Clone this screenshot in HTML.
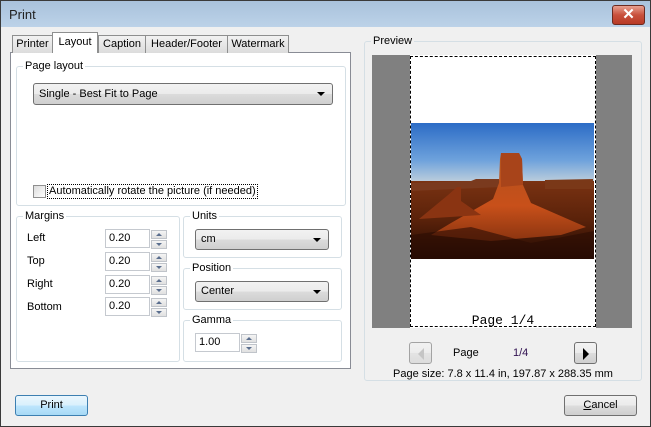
<!DOCTYPE html>
<html><head><meta charset="utf-8"><style>
*{box-sizing:border-box;margin:0;padding:0}
body{width:651px;height:427px;overflow:hidden;font-family:"Liberation Sans",sans-serif;font-size:11px;color:#000;background:#f0f0f0;position:relative}
.a{position:absolute}
.win{left:0;top:0;width:651px;height:427px;border:1px solid #3a3a3a;background:#f0f0f0}
.title{left:1px;top:1px;width:649px;height:26px;background:linear-gradient(#a9c2dc,#bcd2e8);}
.title span{position:absolute;left:8px;top:6px;font-size:13px;color:#222}
.close{left:612px;top:5px;width:33px;height:20px;border:1px solid #6b2a20;border-radius:3px;background:linear-gradient(#e8a090,#c8503c 50%,#b83a26);color:#fff;font-size:15px;font-weight:bold;text-align:center;line-height:18px}
.tab{top:35px;height:18px;border:1px solid #8e8f8f;border-bottom:none;background:linear-gradient(#f2f2f2,#dcdcdc);text-align:center;line-height:16px;font-size:11px}
.tab.sel{top:32px;height:21px;background:#fff;z-index:2;line-height:19px}
.panel{left:10px;top:52px;width:341px;height:317px;border:1px solid #898c95;background:#fff}
.grp{border:1px solid #d5dfe5;border-radius:3px}
.lg{background:inherit;padding:0 2px;font-size:11px;position:absolute;top:-8px;left:6px;line-height:14px}
.combo{border:1px solid #707070;border-radius:3px;background:linear-gradient(#f2f2f2,#ebebeb 50%,#dcdcdc 50%,#cfcfcf);padding-left:5px;line-height:19px}
.combo:after{content:"";position:absolute;right:7px;top:8px;border-left:4px solid transparent;border-right:4px solid transparent;border-top:4px solid #000}
.inp{border:1px solid #c5c9cf;background:#fff;padding-left:3px;line-height:17px;height:19px;width:45px}
.spin{width:16px;height:19px}
.spin div{position:absolute;left:0;width:16px;height:9px;border:1px solid #c0c4ca;background:linear-gradient(#f4f4f4,#e0e0e0)}
.spin div:after{content:"";position:absolute;left:4px;border-left:3px solid transparent;border-right:3px solid transparent}
.spin .u{top:0}.spin .u:after{top:2px;border-bottom:3px solid #5a6e8e}
.spin .d{top:10px}.spin .d:after{top:2px;border-top:3px solid #5a6e8e}
.btn{border:1px solid #707070;border-radius:3px;background:linear-gradient(#f2f2f2,#ebebeb 50%,#dddddd 50%,#cfcfcf);text-align:center;line-height:19px}
</style></head><body>
<div class="a win"></div>
<div class="a title"><span>Print</span></div>
<div class="a close">✕</div>

<div class="a panel"></div>
<div class="a tab" style="left:12px;width:41px">Printer</div>
<div class="a tab sel" style="left:52px;width:46px">Layout</div>
<div class="a tab" style="left:98px;width:48px">Caption</div>
<div class="a tab" style="left:145px;width:83px">Header/Footer</div>
<div class="a tab" style="left:227px;width:62px">Watermark</div>

<div class="a grp" style="left:16px;top:66px;width:330px;height:140px;background:#fff"><span class="lg">Page layout</span></div>
<div class="a combo" style="left:33px;top:83px;width:300px;height:22px;line-height:20px">Single - Best Fit to Page</div>
<div class="a" style="left:33px;top:185px;width:13px;height:13px;border:1px solid #8f8f8f;background:linear-gradient(135deg,#dcdcdc,#fff)"></div>
<div class="a" style="left:47px;top:184px;border:1px dotted #000;padding:0 1px;line-height:13px">Automatically rotate the picture (if needed)</div>

<div class="a grp" style="left:16px;top:216px;width:164px;height:146px;background:#fff"><span class="lg">Margins</span></div>
<div class="a" style="left:27px;top:232px">Left</div>
<div class="a" style="left:27px;top:255px">Top</div>
<div class="a" style="left:27px;top:278px">Right</div>
<div class="a" style="left:27px;top:301px">Bottom</div>
<div class="a inp" style="left:105px;top:229px">0.20</div>
<div class="a inp" style="left:105px;top:252px">0.20</div>
<div class="a inp" style="left:105px;top:275px">0.20</div>
<div class="a inp" style="left:105px;top:297px">0.20</div>
<div class="a spin" style="left:151px;top:230px"><div class="u"></div><div class="d"></div></div>
<div class="a spin" style="left:151px;top:253px"><div class="u"></div><div class="d"></div></div>
<div class="a spin" style="left:151px;top:276px"><div class="u"></div><div class="d"></div></div>
<div class="a spin" style="left:151px;top:298px"><div class="u"></div><div class="d"></div></div>

<div class="a grp" style="left:183px;top:216px;width:159px;height:42px;background:#fff"><span class="lg">Units</span></div>
<div class="a combo" style="left:195px;top:229px;width:134px;height:21px">cm</div>
<div class="a grp" style="left:183px;top:268px;width:159px;height:42px;background:#fff"><span class="lg">Position</span></div>
<div class="a combo" style="left:195px;top:281px;width:134px;height:21px">Center</div>
<div class="a grp" style="left:183px;top:320px;width:159px;height:42px;background:#fff"><span class="lg">Gamma</span></div>
<div class="a inp" style="left:195px;top:333px">1.00</div>
<div class="a spin" style="left:241px;top:334px"><div class="u"></div><div class="d"></div></div>

<div class="a btn" style="left:15px;top:395px;width:73px;height:21px;border-color:#3c7fb1;background:linear-gradient(#eaf6fd,#d9f0fc 50%,#bee6fd 50%,#a7d9f5)">Print</div>
<div class="a btn" style="left:564px;top:395px;width:73px;height:21px"><u>C</u>ancel</div>

<div class="a grp" style="left:364px;top:41px;width:278px;height:340px;background:#f0f0f0"><span class="lg" style="background:#f0f0f0">Preview</span></div>
<div class="a" style="left:372px;top:55px;width:260px;height:273px;background:#808080"></div>
<div class="a" style="left:410px;top:55px;width:186px;height:273px;background:#fff"></div>
<div class="a" style="left:410px;top:56px;width:186px;height:271px;border:1px dashed #000"></div>
<svg class="a" style="left:411px;top:123px" width="183" height="136" viewBox="0 0 183 136">
<defs>
<linearGradient id="sky" x1="0" y1="0" x2="0" y2="1"><stop offset="0" stop-color="#2c6cc6"/><stop offset="0.6" stop-color="#6ea2dc"/><stop offset="1" stop-color="#c8d4dc"/></linearGradient>
<linearGradient id="gr" x1="0" y1="0" x2="0" y2="1"><stop offset="0" stop-color="#7a3212"/><stop offset="0.5" stop-color="#5a220a"/><stop offset="1" stop-color="#220a03"/></linearGradient>
<linearGradient id="bt" x1="0" y1="0" x2="0" y2="1"><stop offset="0" stop-color="#b0521e"/><stop offset="0.6" stop-color="#c8501a"/><stop offset="1" stop-color="#8a3410"/></linearGradient>
</defs>
<rect width="183" height="62" fill="url(#sky)"/>
<rect y="58" width="183" height="78" fill="url(#gr)"/>
<polygon points="0,60 60,58 65,56 88,56 90,64 0,68" fill="#7a3a1e"/>
<polygon points="134,57 182,56 182,66 134,66" fill="#7a3818"/>
<polygon points="90,30 89,36 88,60 82,76 40,100 20,112 80,118 150,112 175,104 120,80 112,62 111,36 108,30" fill="url(#bt)"/>
<polygon points="90,30 108,30 111,36 112,62 90,64" fill="#a8441a"/>
<polygon points="37,72 46,64 50,64 50,78 70,92 8,96" fill="#8a3412"/>
<polygon points="0,112 60,104 120,120 183,108 183,136 0,136" fill="#2a0c04" opacity="0.6"/>
</svg>
<div class="a" style="left:410px;top:313px;width:186px;text-align:center;font-family:'Liberation Mono',monospace;font-size:13px">Page 1/4</div>

<div class="a btn" style="left:409px;top:342px;width:23px;height:22px;opacity:.6"><span style="display:inline-block;margin-top:5px;border-top:6px solid transparent;border-bottom:6px solid transparent;border-right:6px solid #aaa"></span></div>
<div class="a" style="left:453px;top:347px">Page</div>
<div class="a" style="left:513px;top:347px;color:#301050">1/4</div>
<div class="a btn" style="left:574px;top:342px;width:23px;height:22px"><span style="display:inline-block;margin-top:5px;border-top:6px solid transparent;border-bottom:6px solid transparent;border-left:6px solid #000"></span></div>
<div class="a" style="left:364px;top:368px;width:278px;text-align:center">Page size: 7.8 x 11.4 in, 197.87 x 288.35 mm</div>
</body></html>
